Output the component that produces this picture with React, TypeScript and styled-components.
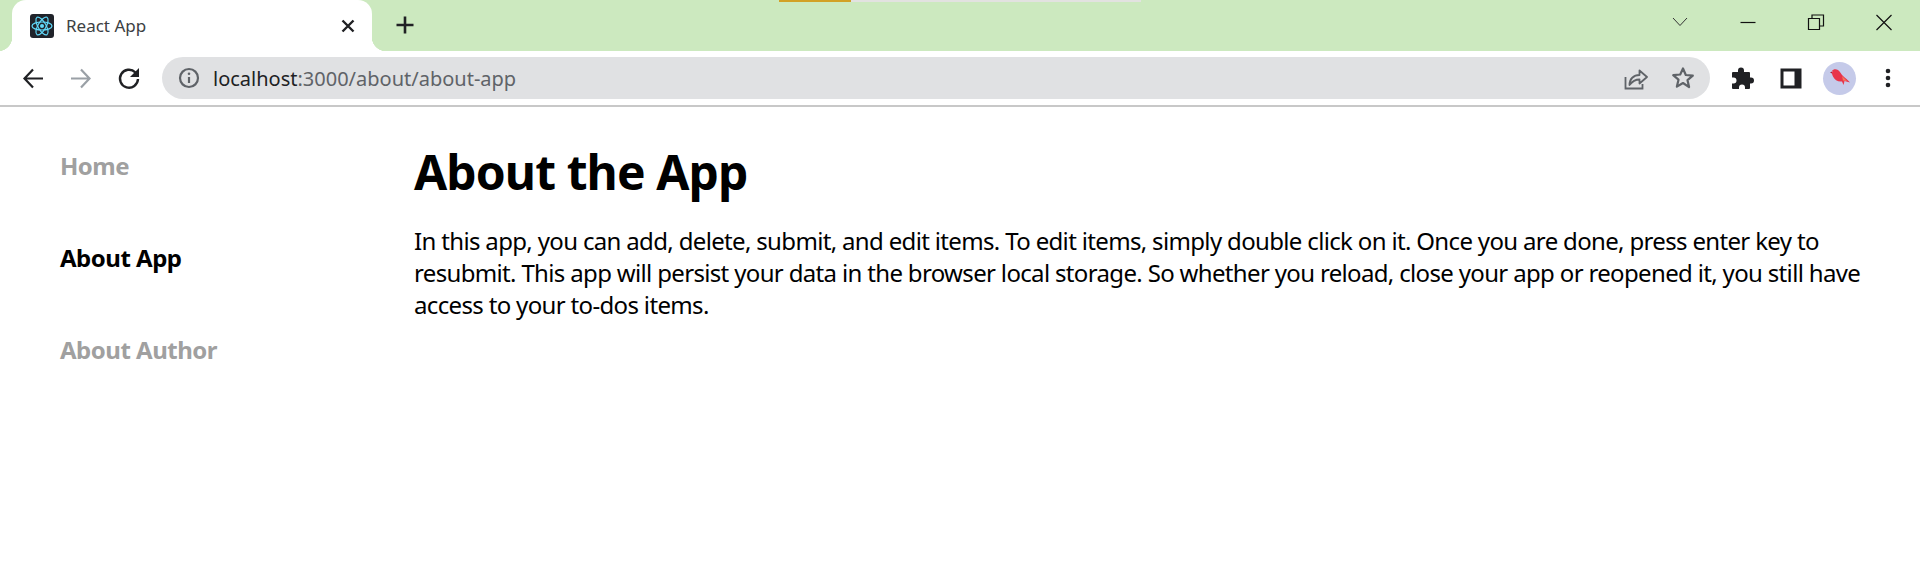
import styled, { createGlobalStyle } from "styled-components";

const GlobalStyle = createGlobalStyle`
  html, body {
    margin: 0;
    padding: 0;
    background: #fff;
  }
  body {
    font-family: "Noto Sans", "Open Sans", sans-serif;
    color: #000;
    overflow: hidden;
  }
`;

const Page = styled.div`
  width: 1920px;
  height: 577px;
  display: flex;
  flex-direction: column;
`;

const TabStrip = styled.div`
  position: relative;
  height: 51px;
  flex: none;
  display: flex;
  align-items: flex-start;
  padding-left: 12px;
  background: #cce9bf;
`;

const LoadingBar = styled.div`
  position: absolute;
  top: 0;
  left: 779px;
  width: 362px;
  height: 2px;
  background: linear-gradient(to right, #d2a126 0 72px, #e2e2e0 72px);
`;

const Tab = styled.div`
  position: relative;
  width: 360px;
  height: 51px;
  box-sizing: border-box;
  padding: 0 12px 0 18px;
  display: flex;
  align-items: center;
  gap: 12px;
  background: #fff;
  border-radius: 14px 14px 0 0;

  &::before,
  &::after {
    content: "";
    position: absolute;
    bottom: 0;
    width: 14px;
    height: 14px;
  }
  &::before {
    left: -14px;
    background: radial-gradient(circle at 0 0, #cce9bf 14px, #fff 14.5px);
  }
  &::after {
    right: -14px;
    background: radial-gradient(circle at 100% 0, #cce9bf 14px, #fff 14.5px);
  }
`;

const Favicon = styled.svg`
  width: 24px;
  height: 24px;
  flex: none;
`;

const TabTitle = styled.span`
  flex: 1;
  font-size: 17px;
  color: #3c4043;
`;

const Icon = styled.svg<{ $size?: number }>`
  width: ${(p) => p.$size ?? 24}px;
  height: ${(p) => p.$size ?? 24}px;
  flex: none;
  display: block;
`;

const NewTab = styled.div`
  margin: 13px 0 0 21px;
  width: 24px;
  height: 24px;
`;

const WindowControls = styled.div`
  margin-left: auto;
  display: flex;
  align-items: center;
  height: 43px;
  padding-right: 24px;
  gap: 44px;
`;

const Toolbar = styled.div`
  height: 54px;
  flex: none;
  display: flex;
  align-items: center;
  box-sizing: border-box;
  padding: 0 0 0 21px;
  background: #fff;
`;

const NavButtons = styled.div`
  display: flex;
  align-items: center;
  gap: 24px;
  margin-right: 21px;
`;

const Omnibox = styled.div`
  width: 1548px;
  height: 42px;
  box-sizing: border-box;
  flex: none;
  display: flex;
  align-items: center;
  padding: 0 15px 0 15px;
  border-radius: 21px;
  background: #e0e1e3;
`;

const Url = styled.div`
  flex: 1;
  margin-left: 12px;
  font-size: 20px;
  color: #5f6368;
`;

const UrlHost = styled.span`
  color: #202124;
`;

const OmniboxActions = styled.div`
  display: flex;
  align-items: center;
  gap: 23px;
`;

const Extensions = styled.div`
  display: flex;
  align-items: center;
  margin-left: 21px;
  gap: 24px;
`;

const Avatar = styled.div`
  width: 33px;
  height: 33px;
  margin: 0 -4px 0 -4px;
  border-radius: 50%;
  background: #c5cae9;
  display: flex;
  align-items: center;
  justify-content: center;
`;

const ToolbarDivider = styled.div`
  height: 2px;
  flex: none;
  background: #c8c8c8;
`;

const Content = styled.div`
  flex: 1;
  display: flex;
`;

const Sidebar = styled.nav`
  width: 414px;
  box-sizing: border-box;
  flex: none;
  padding: 42px 0 0 60px;
  display: flex;
  flex-direction: column;
  gap: 58px;
`;

const NavItem = styled.a<{ $active?: boolean }>`
  font-size: 24px;
  line-height: 34px;
  font-weight: 700;
  letter-spacing: -0.5px;
  color: ${(p) => (p.$active ? "#000" : "#a0a0a0")};
`;

const Main = styled.main`
  flex: 1;
  padding-top: 33px;
`;

const Title = styled.h1`
  margin: 0 0 21px;
  font-size: 48px;
  line-height: 64px;
  font-weight: 700;
  letter-spacing: -0.9px;
`;

const Paragraph = styled.p`
  margin: 0;
  font-size: 24px;
  line-height: 32px;
  letter-spacing: -0.66px;
  white-space: nowrap;
`;

export default function App() {
  return (
    <Page>
      <GlobalStyle />
      <TabStrip>
        <LoadingBar />
        <Tab>
          <Favicon viewBox="0 0 24 24">
            <rect width="24" height="24" rx="3" fill="#20232a" />
            <g fill="none" stroke="#61dafb" strokeWidth="1.2">
              <ellipse cx="12" cy="12" rx="10" ry="4" />
              <ellipse cx="12" cy="12" rx="10" ry="4" transform="rotate(60 12 12)" />
              <ellipse cx="12" cy="12" rx="10" ry="4" transform="rotate(120 12 12)" />
            </g>
            <circle cx="12" cy="12" r="2" fill="#61dafb" />
          </Favicon>
          <TabTitle>React App</TabTitle>
          <Icon viewBox="0 0 24 24">
            <path d="M6.500 6.500l11 11M17.500 6.500l-11 11" stroke="#202124" strokeWidth="2.400" fill="none" />
          </Icon>
        </Tab>
        <NewTab>
          <Icon viewBox="0 0 24 24">
            <path d="M12 3.500v17M3.500 12h17" stroke="#202124" strokeWidth="2.600" fill="none" />
          </Icon>
        </NewTab>
        <WindowControls>
          <Icon viewBox="0 0 24 24">
            <path d="M5 8l7 7.500L19 8" stroke="#333" strokeWidth="1" fill="none" />
          </Icon>
          <Icon viewBox="0 0 24 24">
            <path d="M4.500 12.500h15" stroke="#111" strokeWidth="1.200" fill="none" />
          </Icon>
          <Icon viewBox="0 0 24 24">
            <path d="M4.500 8.500h11v11h-11zM8 8.500V5h11.500v11H15.500" stroke="#111" strokeWidth="1.200" fill="none" />
          </Icon>
          <Icon viewBox="0 0 24 24">
            <path d="M4.500 5l15 15M19.500 5l-15 15" stroke="#111" strokeWidth="1.200" fill="none" />
          </Icon>
        </WindowControls>
      </TabStrip>
      <Toolbar>
        <NavButtons>
          <Icon viewBox="0 0 24 24">
            <path d="M22 12.500H4M12 3.500l-8.500 9 8.500 9" stroke="#202124" strokeWidth="2.200" fill="none" />
          </Icon>
          <Icon viewBox="0 0 24 24">
            <path d="M2 12.500h18M12 3.500l8.500 9-8.500 9" stroke="#9aa0a6" strokeWidth="2.200" fill="none" />
          </Icon>
          <Icon viewBox="0 0 24 24">
            <path d="M21 13a9 9 0 1 1-2.700-6.700" stroke="#202124" strokeWidth="2.400" fill="none" />
            <path d="M22 2v9h-9z" fill="#202124" />
          </Icon>
        </NavButtons>
        <Omnibox>
          <Icon viewBox="0 0 24 24">
            <circle cx="12" cy="12" r="9" stroke="#5f6368" strokeWidth="2.200" fill="none" />
            <path d="M12 11v6" stroke="#5f6368" strokeWidth="2.200" />
            <circle cx="12" cy="7.800" r="1.300" fill="#5f6368" />
          </Icon>
          <Url>
            <UrlHost>localhost</UrlHost>:3000/about/about-app
          </Url>
          <OmniboxActions>
            <Icon viewBox="0 0 24 24">
              <path d="M1.500 11v11.500h17V18" stroke="#5f6368" strokeWidth="1.800" fill="none" />
              <path d="M5.500 19c0-6 4-10 10-10V4.500l7.500 6.500-7.500 6.500v-4c-4 0-7 1.500-10 5.500z" stroke="#5f6368" strokeWidth="1.800" fill="none" strokeLinejoin="round" />
            </Icon>
            <Icon viewBox="0 0 24 24">
              <path d="M12 2.500l2.800 6.500 7 .6-5.300 4.600 1.600 6.900L12 17l-6.100 3.600 1.600-6.900-5.300-4.600 7-.6z" stroke="#5f6368" strokeWidth="2.200" fill="none" strokeLinejoin="round" />
            </Icon>
          </OmniboxActions>
        </Omnibox>
        <Extensions>
          <Icon viewBox="0 0 24 24">
            <path d="M10 1.500a3 3 0 0 1 3 3V6h5a1 1 0 0 1 1 1v4.500h1a3 3 0 0 1 0 6h-1V22a1 1 0 0 1-1 1h-4v-1.500a3 3 0 0 0-6 0V23H2a1 1 0 0 1-1-1v-4.500h1.500a3 3 0 0 0 0-6H1V7a1 1 0 0 1 1-1h5V4.500a3 3 0 0 1 3-3z" fill="#202124" />
          </Icon>
          <Icon viewBox="0 0 24 24">
            <path d="M1.500 2.500h21v20h-21zM4.500 5.500v14h11v-14z" fill="#202124" fillRule="evenodd" />
          </Icon>
          <Avatar>
            <Icon $size={24} viewBox="0 0 24 24">
              <path d="M4 5c1-2 4-2.500 6-1 2 1.500 3 4 5 6 2 2 5 4 7 6.500l-5.500-1.500-1 4-1.500-3.500c-4 .5-7.500-1.500-9-5-1-2-1.500-3.500-.5-5.500z" fill="#e8344a" />
              <path d="M4 5.500L2 6.500 4 7.500z" fill="#a81f35" />
              <path d="M14 10l5 5-4-.5z" fill="#f47a5a" />
            </Icon>
          </Avatar>
          <Icon viewBox="0 0 24 24">
            <circle cx="12" cy="5" r="2.300" fill="#202124" />
            <circle cx="12" cy="12" r="2.300" fill="#202124" />
            <circle cx="12" cy="19" r="2.300" fill="#202124" />
          </Icon>
        </Extensions>
      </Toolbar>
      <ToolbarDivider />
      <Content>
        <Sidebar>
          <NavItem>Home</NavItem>
          <NavItem $active>About App</NavItem>
          <NavItem>About Author</NavItem>
        </Sidebar>
        <Main>
          <Title>About the App</Title>
          <Paragraph>
            In this app, you can add, delete, submit, and edit items. To edit items, simply double click on it. Once you are done, press enter key to
            <br />
            resubmit. This app will persist your data in the browser local storage. So whether you reload, close your app or reopened it, you still have
            <br />
            access to your to-dos items.
          </Paragraph>
        </Main>
      </Content>
    </Page>
  );
}
